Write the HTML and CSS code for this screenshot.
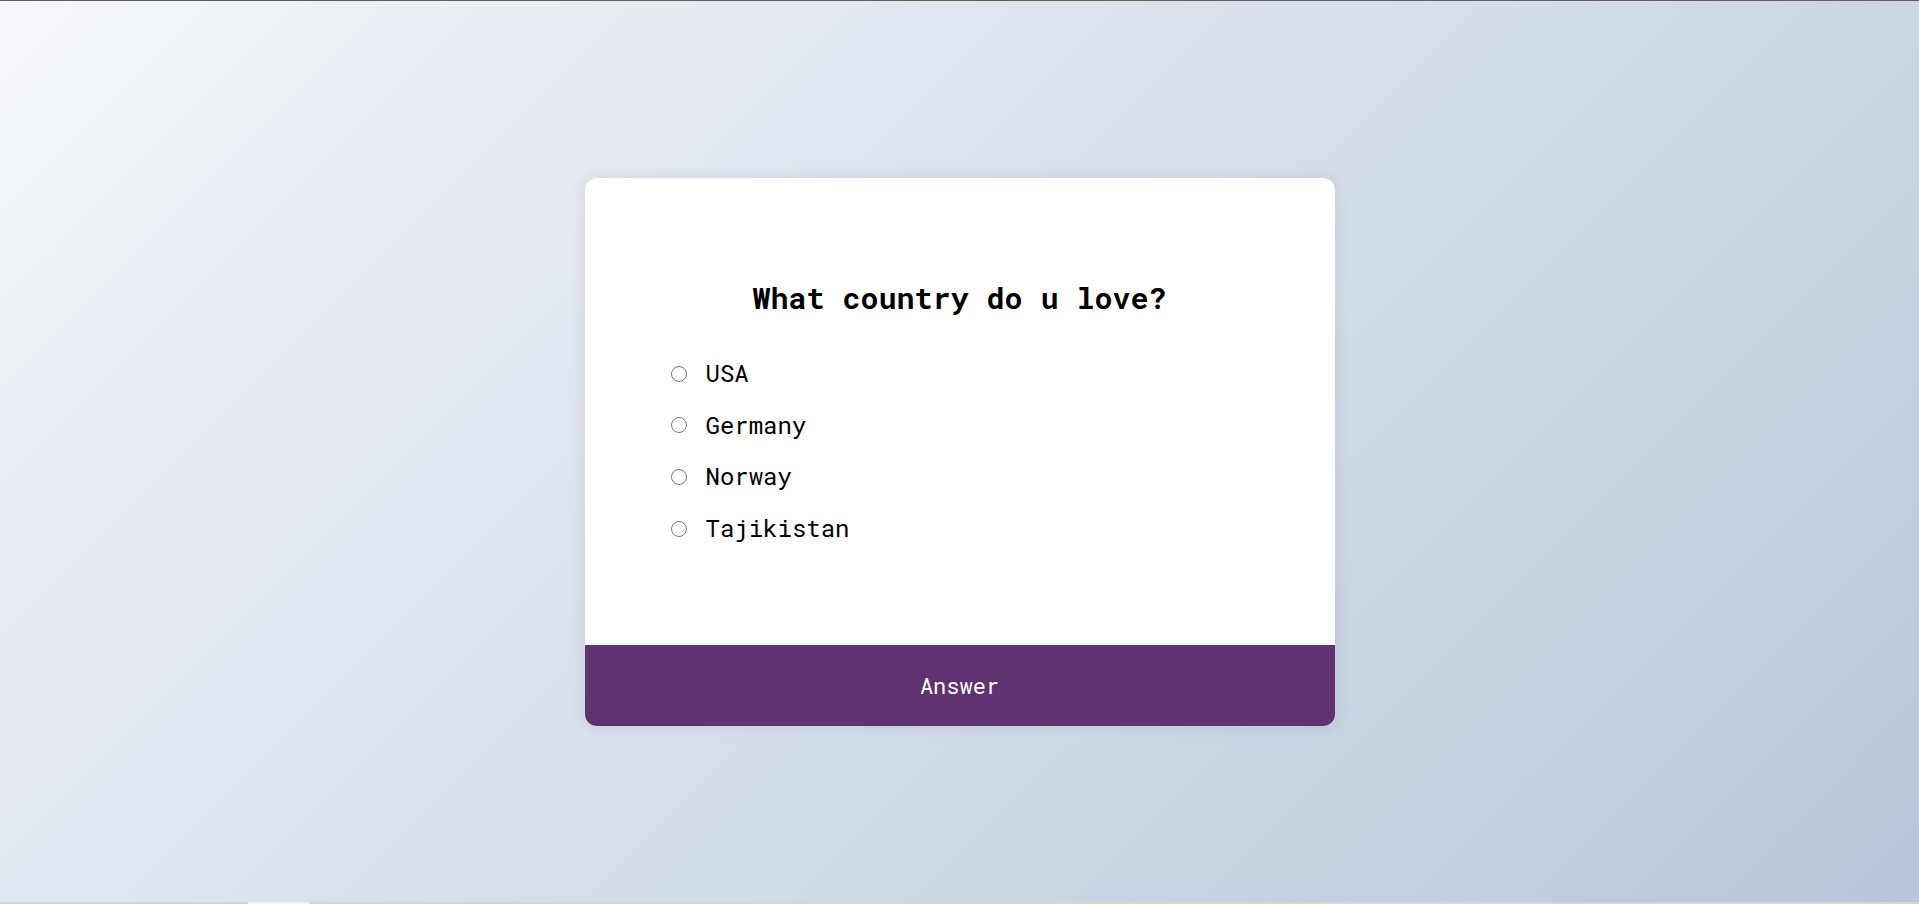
FILE: index.html
```html
<!DOCTYPE html>
<html lang="en">
<head>
<meta charset="UTF-8">
<title>Quiz</title>
<link rel="stylesheet" href="styles.css">
</head>
<body>
<div class="quiz-container">
  <div class="quiz-header">
    <h2 class="question">What country do u love?</h2>
    <ul class="answers">
      <li><input type="radio" name="answer" id="a" class="answer"><label for="a">USA</label></li>
      <li><input type="radio" name="answer" id="b" class="answer"><label for="b">Germany</label></li>
      <li><input type="radio" name="answer" id="c" class="answer"><label for="c">Norway</label></li>
      <li><input type="radio" name="answer" id="d" class="answer"><label for="d">Tajikistan</label></li>
    </ul>
  </div>
  <button class="submit">Answer</button>
</div>
<div class="top-line"></div>
<div class="bottom-strip"><div class="bottom-thumb"></div></div>
</body>
</html>
```
FILE: styles.css
```css
* { box-sizing: border-box; }

body {
  margin: 0;
  height: 100vh;
  overflow: hidden;
  display: flex;
  align-items: center;
  justify-content: center;
  font-family: "Roboto Mono", "DejaVu Sans Mono", "Liberation Mono", monospace;
  background-color: #b8c6db;
  background-image: linear-gradient(315deg, #b8c6db 0%, #f5f7fa 100%);
}

.quiz-container {
  background-color: #fff;
  border-radius: 12px;
  box-shadow: 0 0 12px 3px rgba(100, 100, 100, 0.1);
  width: 750px;
  overflow: hidden;
}

.quiz-header {
  padding: 80px;
}

.question {
  padding: 20px;
  margin: 0;
  text-align: center;
  font-size: 30px;
  line-height: 1.32;
  font-weight: bold;
  color: #000;
}

.answers {
  list-style-type: none;
  padding: 0;
  margin: 20px 0;
}

.answers li {
  font-size: 24px;
  line-height: 1.32;
  margin: 20px 0;
  display: flex;
  align-items: center;
}

.answer {
  width: 16px;
  height: 16px;
  margin: 0 4px 0 6px;
}

.answers label {
  margin-left: 15px;
  cursor: pointer;
}

.submit {
  background-color: #5f3370;
  color: #fff;
  border: none;
  display: block;
  width: 100%;
  font-family: inherit;
  font-size: 22px;
  line-height: 1.32;
  padding: 26px;
  cursor: pointer;
}

.top-line {
  position: fixed;
  top: 0;
  left: 0;
  right: 0;
  height: 1px;
  background: #5e5e5e;
}

.bottom-strip {
  position: fixed;
  left: 0;
  right: 0;
  bottom: 0;
  height: 2px;
  background: #d6d6d6;
}

.bottom-thumb {
  margin-left: 248px;
  width: 61px;
  height: 2px;
  background: #f2f2f2;
}
```
